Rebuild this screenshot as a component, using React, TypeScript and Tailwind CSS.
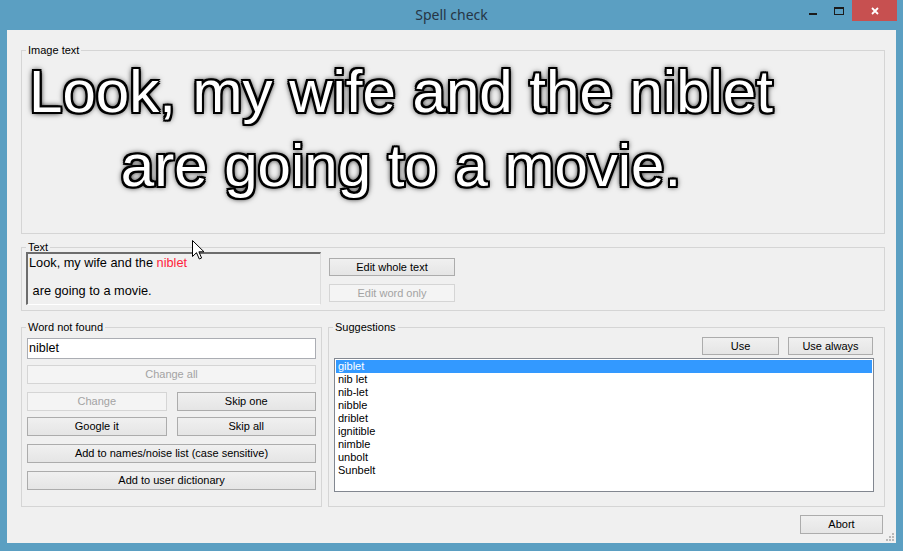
import clsx from 'clsx';
import type { ReactNode } from 'react';

const suggestions = ['giblet', 'nib let', 'nib-let', 'nibble', 'driblet', 'ignitible', 'nimble', 'unbolt', 'Sunbelt'];

function Btn({ children, disabled, className }: { children: ReactNode; disabled?: boolean; className?: string }) {
  return (
    <button
      className={clsx(
        'flex items-center justify-center border text-[11px] leading-none',
        disabled
          ? 'border-[#d5d5d5] bg-[#f4f4f4] text-[#a3a3a3]'
          : 'border-[#acacac] bg-linear-to-b from-[#f0f0f0] to-[#e5e5e5] text-black',
        className
      )}
    >
      {children}
    </button>
  );
}

function Group({ label, className, children }: { label: string; className?: string; children: ReactNode }) {
  return (
    <fieldset className={clsx('min-w-0 border border-[#d5d5d5]', className)}>
      <legend className="ml-[4px] px-[2px] text-[11px] leading-[13px] text-black">{label}</legend>
      {children}
    </fieldset>
  );
}

export default function App() {
  return (
    <div className="relative flex h-[551px] w-[903px] flex-col overflow-hidden bg-[#5b9fc2] font-['Liberation_Sans',Arial,sans-serif]">
      {/* title bar */}
      <div className="grid h-[30px] grid-cols-[1fr_auto_1fr]">
        <div />
        <div className="pt-[6px] font-['Noto_Sans',sans-serif] text-[14px] leading-[18px] text-[#263545]">Spell check</div>
        <div className="flex justify-end pr-[6px]">
          <div className="flex h-[21px] w-[26px] justify-center">
            <div className="mt-[13px] h-[2px] w-[8px] bg-[#1b1b1b]" />
          </div>
          <div className="flex h-[21px] w-[26px] justify-center">
            <div className="mt-[7px] h-[8px] w-[10px] border border-t-2 border-[#1b1b1b]" />
          </div>
          <div className="flex h-[21px] w-[45px] items-center justify-center bg-[#c75050]">
            <svg width="8" height="8" viewBox="0 0 8 8">
              <path d="M1 1L7 7M7 1L1 7" stroke="#fff" strokeWidth="1.8" />
            </svg>
          </div>
        </div>
      </div>

      {/* client area */}
      <div className="relative mx-[7px] flex h-[513px] flex-col bg-[#f0f0f0]">
        <Group label="Image text" className="mt-[14px] ml-[14px] mr-[11px] h-[190px]">
          <div className="-mt-[2px] w-[758px] text-center text-[60px] leading-[74px] text-white [text-shadow:-2px_-2px_0_#000,2px_-2px_0_#000,-2px_2px_0_#000,2px_2px_0_#000,0_-2px_0_#000,0_2px_0_#000,-2px_0_0_#000,2px_0_0_#000,0_0_5px_#000,0_0_7px_#000]">
            Look, my wife and the niblet
            <br />
            are going to a movie.
          </div>
        </Group>

        <Group label="Text" className="mt-[7px] ml-[14px] mr-[11px] h-[70px]">
          <div className="flex items-start">
            <div className="-mt-[2px] ml-[4px] h-[53px] w-[295px] border-t-2 border-r border-b border-l-2 border-t-[#6d6d6d] border-r-[#dcdcdc] border-b-white border-l-[#6d6d6d] pt-[2px] pl-[1px] text-[12.75px] leading-[14px] whitespace-pre text-black">
              {'Look, my wife and the '}
              <span className="text-[#ff1e3c]">niblet</span>
              {'\n\n are going to a movie.'}
            </div>
            <div className="mt-[4px] ml-[8px] flex flex-col gap-[8px]">
              <Btn className="h-[18px] w-[126px]">Edit whole text</Btn>
              <Btn disabled className="h-[18px] w-[126px]">Edit word only</Btn>
            </div>
          </div>
        </Group>

        <div className="mt-[10px] ml-[14px] mr-[11px] flex gap-[6px]">
          <Group label="Word not found" className="w-[301px]">
            <div className="flex flex-col px-[5px] pt-[4px] pb-[15px]">
              <div className="flex h-[21px] items-center border border-[#abadb3] bg-white pl-[1px] text-[12.5px] text-black">niblet</div>
              <Btn disabled className="mt-[6px] h-[19px]">Change all</Btn>
              <div className="mt-[8px] grid grid-cols-2 gap-x-[10px] gap-y-[6px]">
                <Btn disabled className="h-[19px]">Change</Btn>
                <Btn className="h-[19px]">Skip one</Btn>
                <Btn className="h-[19px]">Google it</Btn>
                <Btn className="h-[19px]">Skip all</Btn>
              </div>
              <Btn className="mt-[8px] h-[19px]">Add to names/noise list (case sensitive)</Btn>
              <Btn className="mt-[8px] h-[19px]">Add to user dictionary</Btn>
            </div>
          </Group>

          <Group label="Suggestions" className="flex-1">
            <div className="flex flex-col pt-[3px] pr-[10px] pb-[14px] pl-[5px]">
              <div className="mr-[1px] flex justify-end gap-[9px]">
                <Btn className="h-[18px] w-[77px]">Use</Btn>
                <Btn className="h-[18px] w-[85px]">Use always</Btn>
              </div>
              <div className="mt-[3px] h-[134px] border border-[#828790] bg-white p-[1px]">
                {suggestions.map((s, i) => (
                  <div
                    key={s}
                    className={clsx('h-[13px] pl-[2px] text-[11px] leading-[13px]', i === 0 ? 'bg-[#3399ff] text-white' : 'text-black')}
                  >
                    {s}
                  </div>
                ))}
              </div>
            </div>
          </Group>
        </div>

        <div className="mt-[8px] mr-[13px] flex justify-end">
          <Btn className="h-[19px] w-[83px]">Abort</Btn>
        </div>

        {/* resize grip */}
        <svg className="absolute right-[2px] bottom-[2px]" width="9" height="9" viewBox="0 0 9 9">
          {[
            [7, 1],
            [4, 4],
            [7, 4],
            [1, 7],
            [4, 7],
            [7, 7],
          ].map(([x, y]) => (
            <rect key={`${x}-${y}`} x={x} y={y} width="2" height="2" fill="#b8b8b8" />
          ))}
        </svg>
      </div>

      {/* mouse pointer */}
      <svg className="absolute top-[240px] left-[192px]" width="13" height="20" viewBox="0 0 13 20">
        <path d="M0.5 0.5V16.5L4.5 12.7L7.3 19L9.6 18L6.9 11.8H12Z" fill="#fff" stroke="#000" strokeWidth="1" strokeLinejoin="miter" />
      </svg>
    </div>
  );
}
